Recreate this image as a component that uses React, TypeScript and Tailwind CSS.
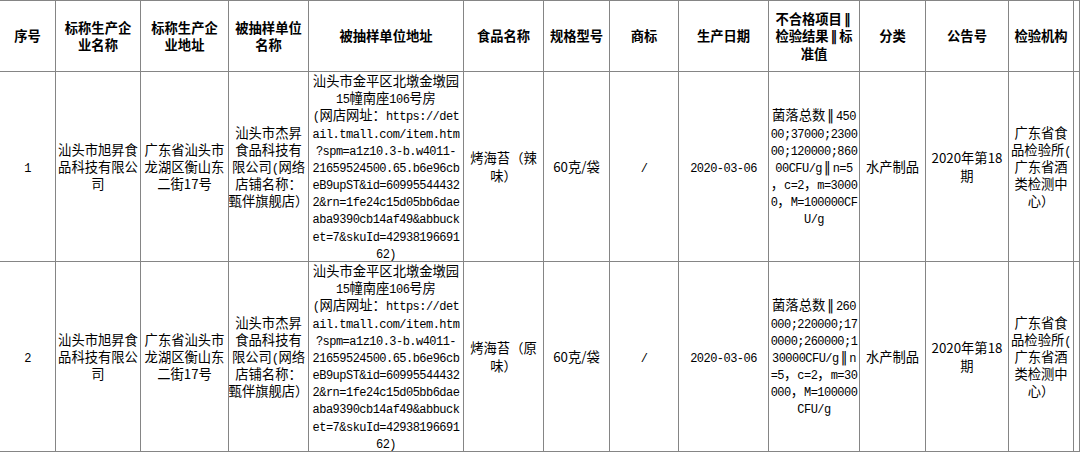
import React from "react";

const cols =
  "grid grid-cols-[56px_85px_88px_80px_155px_80px_66px_69px_90px_91px_66px_83px_65px_1fr]";

const cell =
  "flex flex-col items-center justify-center overflow-hidden border-r border-b border-[#858585] text-center";

// ASCII runs are drawn half-width, as in the source sheet
const Line = ({ text, mono = true }: { text: string; mono?: boolean }) => {
  const parts = text.split(/([\x20-\x7e]+|‖)/).filter(Boolean);
  return (
    <div className="h-[17.2px] whitespace-nowrap leading-[17.2px]">
      {parts.map((p, i) =>
        p === "‖" ? (
          <span key={i} className="px-[2px] font-['DejaVu_Sans',sans-serif]">
            ‖
          </span>
        ) : mono && /^[\x20-\x7e]+$/.test(p) ? (
          <span
            key={i}
            className="font-['Liberation_Mono',monospace] text-[12px] tracking-[-0.53px]"
          >
            {p}
          </span>
        ) : (
          <span key={i}>{p}</span>
        )
      )}
    </div>
  );
};

const Cell = ({ lines, mono = true }: { lines: string[]; mono?: boolean }) => (
  <div className={cell}>
    {lines.map((l, i) => (
      <Line key={i} text={l} mono={mono} />
    ))}
  </div>
);

const header = [
  ["序号"],
  ["标称生产企", "业名称"],
  ["标称生产企", "业地址"],
  ["被抽样单位", "名称"],
  ["被抽样单位地址"],
  ["食品名称"],
  ["规格型号"],
  ["商标"],
  ["生产日期"],
  ["不合格项目‖", "检验结果‖标", "准值"],
  ["分类"],
  ["公告号"],
  ["检验机构"],
  [""],
];

const address = [
  "汕头市金平区北墩金墩园",
  "15幢南座106号房",
  "(网店网址：https://det",
  "ail.tmall.com/item.htm",
  "?spm=a1z10.3-b.w4011-",
  "21659524500.65.b6e96cb",
  "eB9upST&id=60995544432",
  "2&rn=1fe24c15d05bb6dae",
  "aba9390cb14af49&abbuck",
  "et=7&skuId=42938196691",
  "62)",
];

const rows = [
  {
    no: "1",
    food: ["烤海苔（辣", "味）"],
    result: [
      "菌落总数‖450",
      "00;37000;2300",
      "00;120000;860",
      "00CFU/g‖n=5",
      "，c=2，m=3000",
      "0，M=100000CF",
      "U/g",
    ],
  },
  {
    no: "2",
    food: ["烤海苔（原", "味）"],
    result: [
      "菌落总数‖260",
      "000;220000;17",
      "0000;260000;1",
      "30000CFU/g‖n",
      "=5，c=2，m=30",
      "000，M=100000",
      "CFU/g",
    ],
  },
];

export default function App() {
  return (
    <div className="h-[454px] w-[1080px] overflow-hidden bg-white font-['Noto_Sans_CJK_SC',sans-serif] text-[13.3px] text-black">
      <div className="border-t border-[#858585]">
        <div className={`${cols} h-[71px] font-bold`}>
          {header.map((h, i) => (
            <Cell key={i} lines={h} mono={false} />
          ))}
        </div>
        {rows.map((r) => (
          <div key={r.no} className={`${cols} h-[190px]`}>
            <Cell lines={[r.no]} />
            <Cell lines={["汕头市旭昇食", "品科技有限公", "司"]} />
            <Cell lines={["广东省汕头市", "龙湖区衡山东", "二街17号"]} mono={false} />
            <Cell lines={["汕头市杰昇", "食品科技有", "限公司(网络", "店铺名称：", "甄伴旗舰店）"]} />
            <Cell lines={address} />
            <Cell lines={r.food} />
            <Cell lines={["60克/袋"]} mono={false} />
            <Cell lines={["/"]} />
            <Cell lines={["2020-03-06"]} />
            <Cell lines={r.result} />
            <Cell lines={["水产制品"]} />
            <Cell lines={["2020年第18", "期"]} mono={false} />
            <Cell lines={["广东省食", "品检验所(", "广东省酒", "类检测中", "心）"]} />
            <Cell lines={[""]} />
          </div>
        ))}
      </div>
    </div>
  );
}
